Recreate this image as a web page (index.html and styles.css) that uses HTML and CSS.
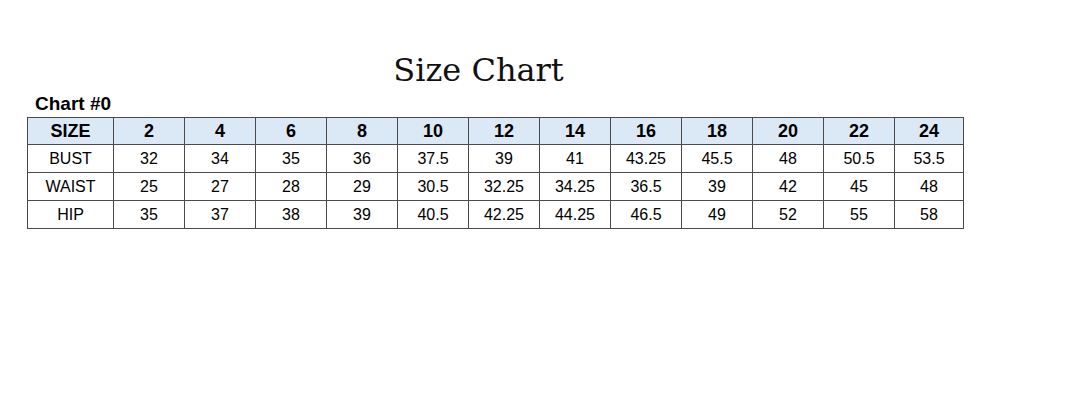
FILE: index.html
```html
<!DOCTYPE html>
<html>
<head>
<meta charset="utf-8">
<link rel="stylesheet" href="styles.css">
</head>
<body>
<div class="page">
  <h1 class="title">Size Chart</h1>
  <div class="chart">
    <div class="chart-label">Chart #0</div>
    <table class="size-table">
      <colgroup>
        <col class="c-first">
        <col class="c"><col class="c"><col class="c"><col class="c"><col class="c"><col class="c">
        <col class="c"><col class="c"><col class="c"><col class="c"><col class="c"><col class="c-last">
      </colgroup>
      <thead>
        <tr><th>SIZE</th><th>2</th><th>4</th><th>6</th><th>8</th><th>10</th><th>12</th><th>14</th><th>16</th><th>18</th><th>20</th><th>22</th><th>24</th></tr>
      </thead>
      <tbody>
        <tr><td>BUST</td><td>32</td><td>34</td><td>35</td><td>36</td><td>37.5</td><td>39</td><td>41</td><td>43.25</td><td>45.5</td><td>48</td><td>50.5</td><td>53.5</td></tr>
        <tr><td>WAIST</td><td>25</td><td>27</td><td>28</td><td>29</td><td>30.5</td><td>32.25</td><td>34.25</td><td>36.5</td><td>39</td><td>42</td><td>45</td><td>48</td></tr>
        <tr><td>HIP</td><td>35</td><td>37</td><td>38</td><td>39</td><td>40.5</td><td>42.25</td><td>44.25</td><td>46.5</td><td>49</td><td>52</td><td>55</td><td>58</td></tr>
      </tbody>
    </table>
  </div>
</div>
</body>
</html>
```
FILE: styles.css
```css
html, body {
  margin: 0;
  padding: 0;
  background: #ffffff;
}
.page {
  padding-top: 50px;
  color: #000;
}
.title {
  width: 957px;
  margin: 0;
  text-align: center;
  font-family: "DejaVu Serif", serif;
  font-weight: normal;
  font-size: 32px;
  line-height: 40px;
  color: #111;
}
.chart {
  padding-left: 27px;
}
.chart-label {
  padding-left: 8px;
  font-family: "Liberation Sans", Arial, sans-serif;
  font-weight: bold;
  font-size: 19px;
  line-height: 27px;
}
.size-table {
  border-collapse: collapse;
  table-layout: fixed;
  width: 936px;
  font-family: "Liberation Sans", Arial, sans-serif;
}
.c-first { width: 86px; }
.c { width: 71px; }
.c-last { width: 69px; }
.size-table th,
.size-table td {
  border: 1px solid #4a4a4a;
  text-align: center;
  padding: 0;
}
.size-table th {
  background: #dbe8f5;
  font-weight: bold;
  font-size: 18px;
  height: 26px;
}
.size-table td {
  font-size: 16px;
  height: 27px;
}
```
